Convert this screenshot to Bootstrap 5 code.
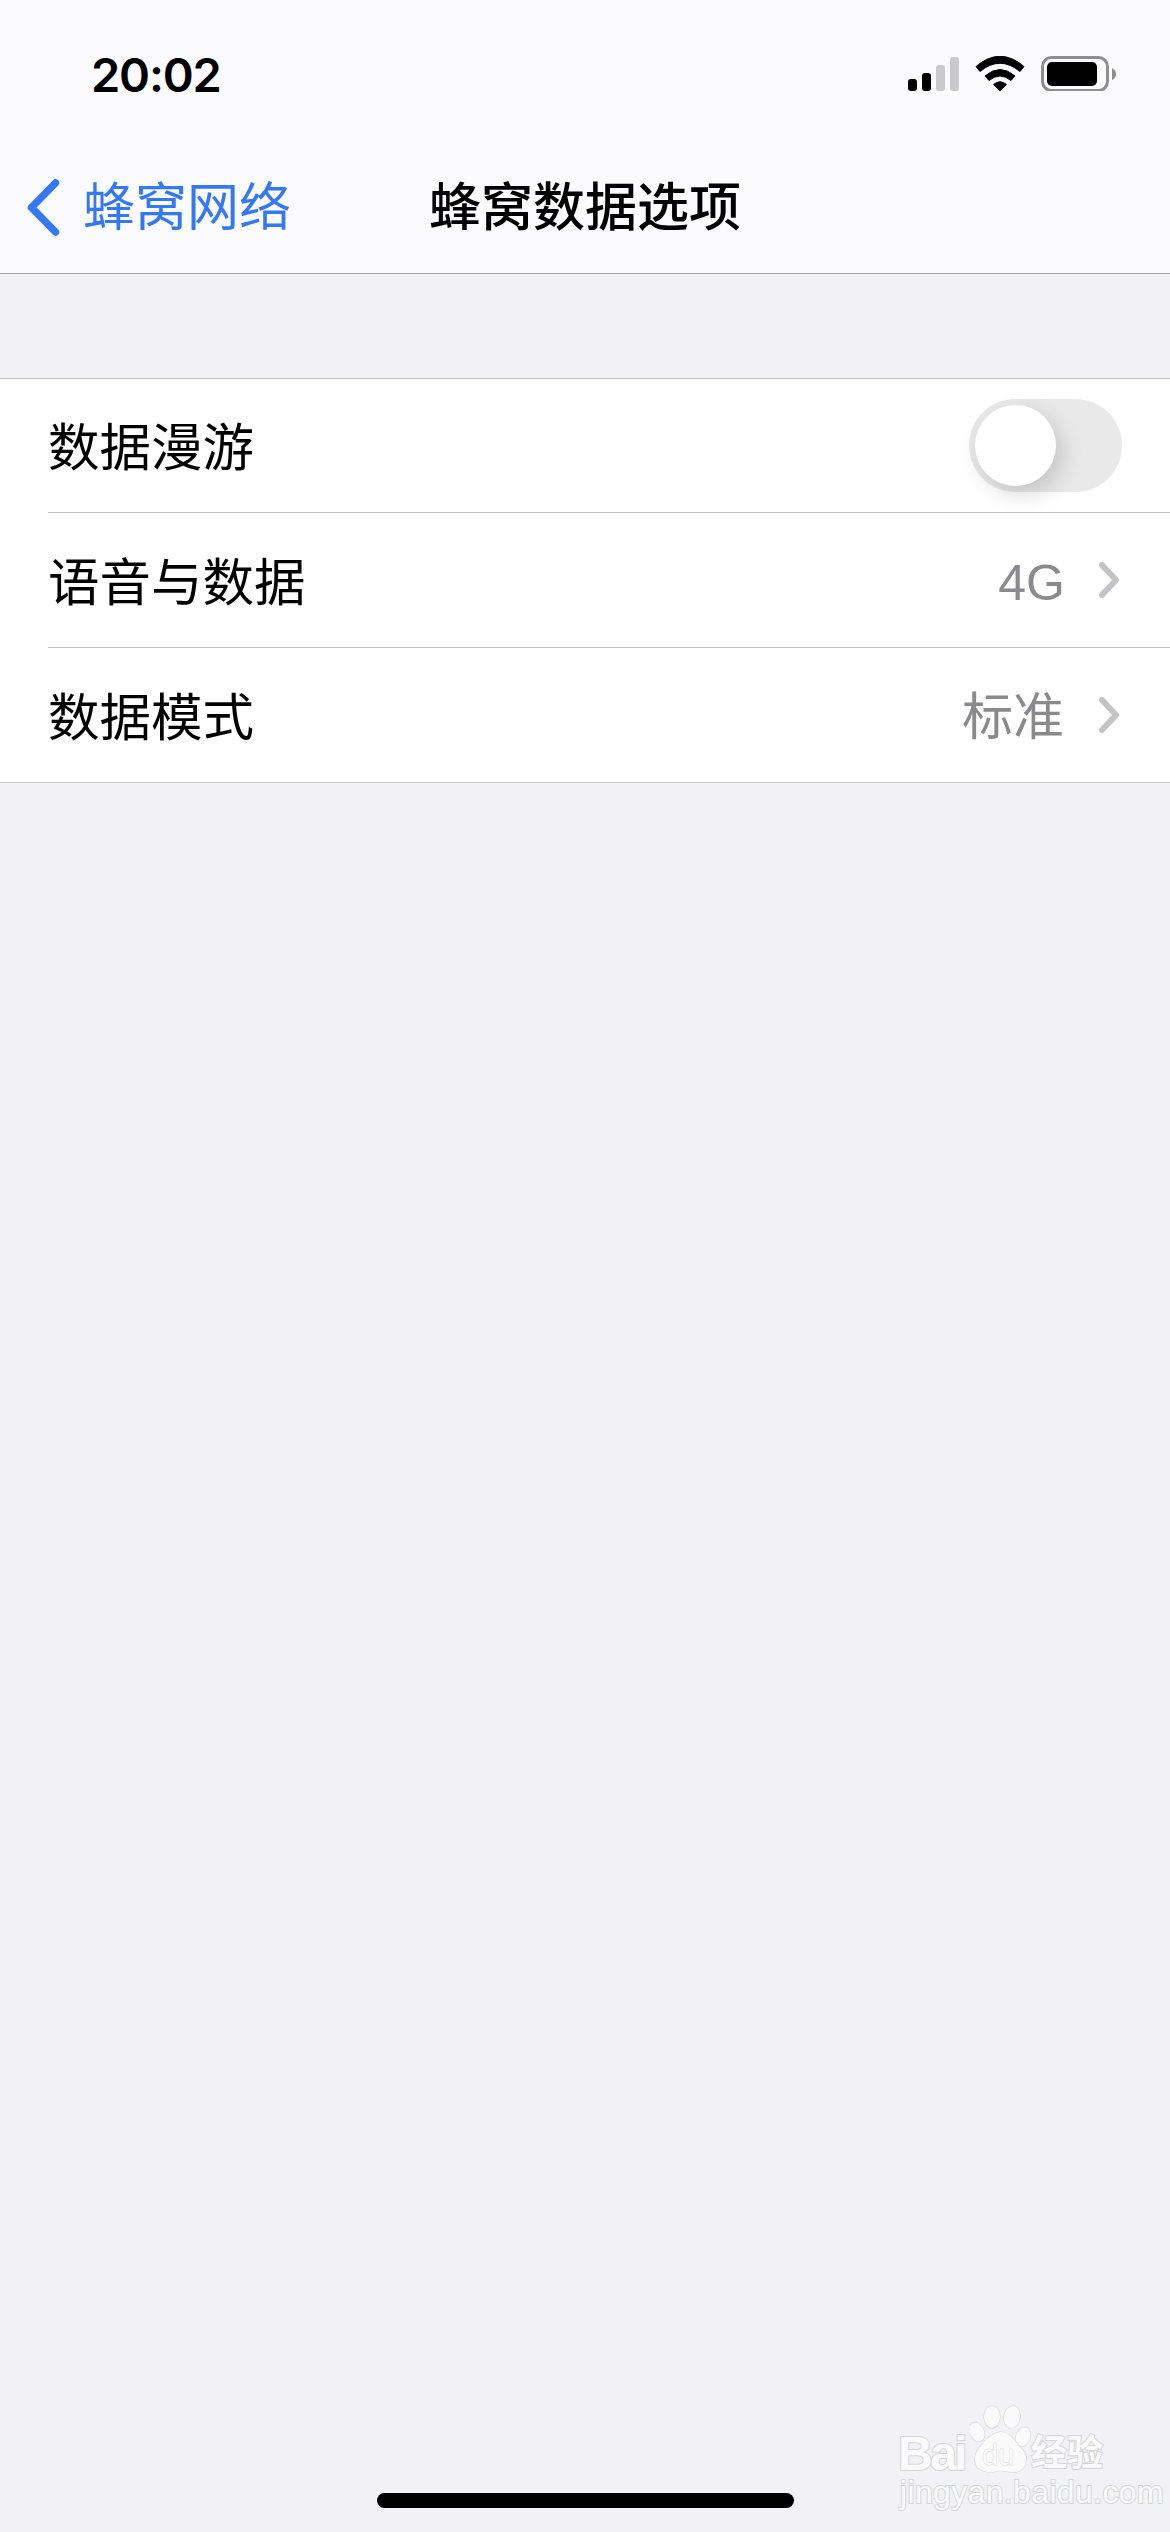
<!DOCTYPE html>
<html lang="zh-CN">
<head>
    <meta charset="UTF-8">
    <meta name="viewport" content="width=device-width, initial-scale=1.0">
    <title>蜂窝数据选项</title>
    <link href="https://cdn.jsdelivr.net/npm/bootstrap@5.3.0/dist/css/bootstrap.min.css" rel="stylesheet">
    <style>
        html, body { height: 100%; }
        body {
            background: #f1f1f6;
            font-family: "Liberation Sans", "Noto Sans CJK SC", sans-serif;
            color: #000;
        }
        .phone-screen { height: 2532px; position: relative; overflow: hidden; }
        .top-area { height: 274px; background: #fbfbfd; border-bottom: 1px solid #a0a0a2; }
        .status-row { height: 140px; padding: 4px 54px 0 91px; }
        .clock { font-family: Inter, "Liberation Sans", sans-serif; font-weight: 600; font-size: 47px; line-height: 1; letter-spacing: -1.2px; margin-top: 5px; }
        .status-icons { margin-top: 3px; }
        .nav-row { height: 133px; padding-top: 3px; display: grid; grid-template-columns: 1fr auto 1fr; align-items: center; }
        .back-link { color: #3478f6; font-size: 52px; line-height: 1; padding-left: 21px; gap: 20px; text-decoration: none; }
        .nav-title { font-size: 52px; line-height: 1; font-weight: 500; }
        .settings-list { margin-top: 104px; border-top: 1px solid #c4c4c6; border-bottom: 1px solid #c4c4c6; border-radius: 0; }
        .settings-item { padding: 0 0 0 48px; border: 0; background: #fff; color: #000; }
        .settings-inner { height: 133px; padding-right: 48px; font-size: 51.5px; line-height: 1; }
        .settings-item + .settings-item .settings-inner { border-top: 1px solid #c4c4c6; height: 135px; }
        .row-label { margin-top: 7px; }
        .value-text { color: #8a8a8e; font-size: 51px; margin-top: 5px; }
        .value-latin { font-size: 50px; margin-right: -1px; }
        .chevron-wrap { width: 23px; margin-left: 34px; margin-right: 1px; }
        .ios-toggle { width: 153px; height: 93px; border-radius: 47px; background: #e9e9ea; padding: 6px; }
        .ios-toggle-knob { width: 81px; height: 81px; border-radius: 50%; background: #fff; box-shadow: 6px 8px 22px rgba(0,0,0,.16); }
        .home-bar { width: 417px; height: 15px; border-radius: 8px; background: #000; margin: auto auto 24px; }
        .wm-block { position: absolute; left: 895px; top: 2405px; width: 215px; height: 105px; color: #fafafa; -webkit-text-stroke: 2px #d6d6d8; paint-order: stroke fill; }
        .wm-bai { position: absolute; left: 3px; top: 26px; font-family: "Liberation Sans", sans-serif; font-weight: 700; font-size: 48px; line-height: .95; letter-spacing: -2.5px; paint-order: stroke fill; }
        .wm-jing { position: absolute; left: 136px; top: 29px; font-size: 36px; font-weight: 700; line-height: 1.1; paint-order: stroke fill; }
        .wm-url { position: absolute; left: 5px; top: 73px; font-size: 32px; line-height: .9; letter-spacing: .35px; paint-order: stroke fill; }
        .wm-paw { position: absolute; left: 75px; top: 0; }
    </style>
</head>
<body>
    <div class="phone-screen d-flex flex-column">
        <div class="top-area flex-shrink-0">
            <div class="status-row d-flex justify-content-between align-items-center">
                <span class="clock">20:02</span>
                <div class="status-icons d-flex align-items-center">
                    <svg width="208" height="35" viewBox="907 56 208 35">
                        <rect x="907" y="79" width="9" height="12" rx="3" fill="#000"/>
                        <rect x="921" y="73" width="9" height="18" rx="3" fill="#000"/>
                        <rect x="935" y="65" width="9" height="26" rx="3" fill="#c9c9cb"/>
                        <rect x="949" y="57" width="9" height="34" rx="3" fill="#c9c9cb"/>
                        <path d="M975 66.5 Q999 46 1023 66.5 L1019 71.5 Q999 55 979 71.5Z" fill="#000" stroke="#000" stroke-width="1" stroke-linejoin="round"/>
                        <path d="M984 76 Q999 63 1014 76 L1010 80.5 Q999 71.5 988 80.5Z" fill="#000" stroke="#000" stroke-width="1" stroke-linejoin="round"/>
                        <path d="M992.5 84.5 Q999 79 1005.5 84.5 L999 91Z" fill="#000" stroke="#000" stroke-width="1" stroke-linejoin="round"/>
                        <rect x="1041.5" y="57.5" width="65" height="33" rx="9" fill="none" stroke="#8e8e8e" stroke-width="3"/>
                        <rect x="1046" y="62" width="50" height="24" rx="5" fill="#000"/>
                        <path d="M1111 68 Q1115 70 1115 74 Q1115 78 1111 80Z" fill="#8e8e8e"/>
                    </svg>
                </div>
            </div>
            <div class="nav-row">
                <a class="back-link d-flex align-items-center" href="#">
                    <svg width="42" height="62" viewBox="21 176 42 62">
                        <path d="M55.5 182 L31.5 206.5 L55.5 231" fill="none" stroke="#3478f6" stroke-width="7.5" stroke-linecap="round" stroke-linejoin="round"/>
                    </svg>
                    <span>蜂窝网络</span>
                </a>
                <span class="nav-title">蜂窝数据选项</span>
                <span></span>
            </div>
        </div>

        <div class="list-group settings-list flex-shrink-0">
            <div class="list-group-item settings-item">
                <div class="settings-inner d-flex align-items-center justify-content-between">
                    <span class="row-label">数据漫游</span>
                    <div class="ios-toggle"><div class="ios-toggle-knob"></div></div>
                </div>
            </div>
            <div class="list-group-item settings-item">
                <div class="settings-inner d-flex align-items-center">
                    <span class="row-label me-auto">语音与数据</span>
                    <span class="value-text value-latin">4G</span>
                    <span class="chevron-wrap d-flex">
                        <svg width="23" height="38" viewBox="0 0 23 38"><path d="M4 4 L18 19 L4 34" fill="none" stroke="#c4c4c7" stroke-width="6" stroke-linecap="round" stroke-linejoin="round"/></svg>
                    </span>
                </div>
            </div>
            <div class="list-group-item settings-item">
                <div class="settings-inner d-flex align-items-center">
                    <span class="row-label me-auto">数据模式</span>
                    <span class="value-text">标准</span>
                    <span class="chevron-wrap d-flex">
                        <svg width="23" height="38" viewBox="0 0 23 38"><path d="M4 4 L18 19 L4 34" fill="none" stroke="#c4c4c7" stroke-width="6" stroke-linecap="round" stroke-linejoin="round"/></svg>
                    </span>
                </div>
            </div>
        </div>

        <div class="home-bar"></div>

        <!-- watermark -->
        <div class="wm-block">
            <span class="wm-bai">Bai</span>
            <svg class="wm-paw" width="66" height="72" viewBox="0 0 66 72">
                <g fill="#fafafa" stroke="#d6d6d8" stroke-width="1.2">
                    <ellipse cx="7" cy="27" rx="7" ry="10" transform="rotate(-25 7 27)"/>
                    <ellipse cx="22" cy="12" rx="8" ry="11"/>
                    <ellipse cx="42" cy="12" rx="8" ry="11" transform="rotate(10 42 12)"/>
                    <ellipse cx="53" cy="32" rx="7" ry="10" transform="rotate(20 53 32)"/>
                    <path d="M31 27 C40 27 45 37 52 44 C60 52 56 68 43 67 C37 67 33 65 28 66 C16 69 4 65 5 53 C6 43 21 27 31 27Z"/>
                </g>
                <text x="12" y="60" font-family="Liberation Sans, sans-serif" font-size="29" fill="#fafafa" stroke="#cfcfd1" stroke-width=".7">du</text>
            </svg>
            <span class="wm-jing">经验</span>
            <span class="wm-url">jingyan.baidu.com</span>
        </div>
    </div>

    <script src="https://cdn.jsdelivr.net/npm/bootstrap@5.3.0/dist/js/bootstrap.bundle.min.js"></script>
</body>
</html>
